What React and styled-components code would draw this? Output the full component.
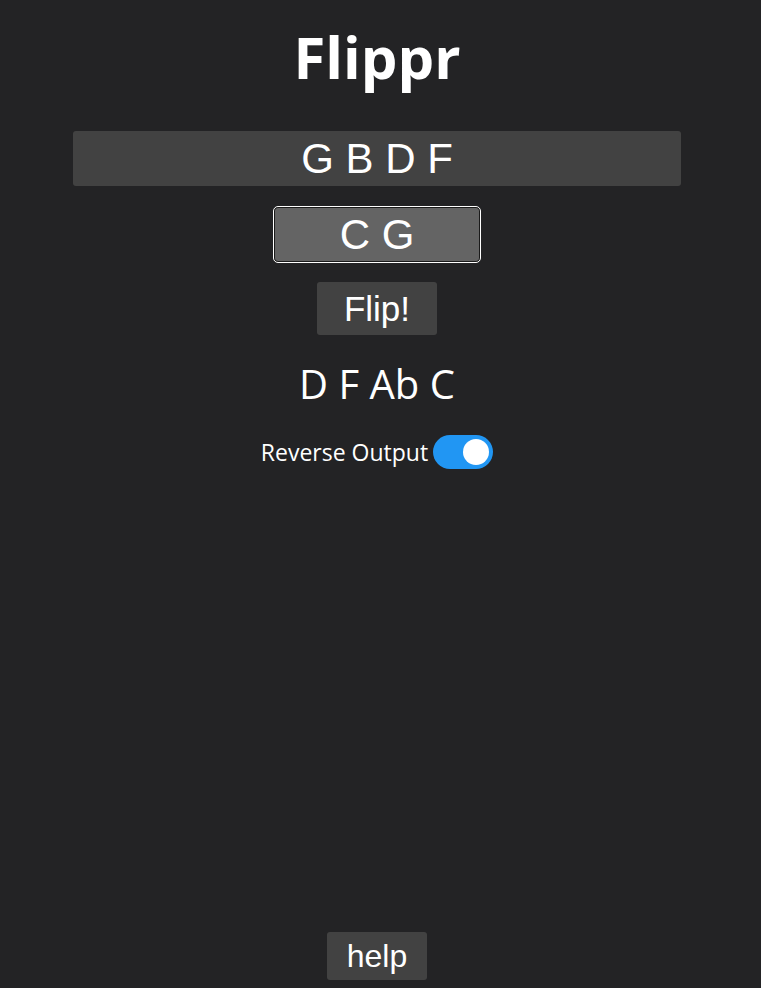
import React, { useState } from "react";
import styled, { createGlobalStyle } from "styled-components";

const Global = createGlobalStyle`
  html, body { margin: 0; padding: 0; background: #232325; }
  body { font-family: "Open Sans", sans-serif; color: #fff; }
  * { box-sizing: border-box; }
`;

const Page = styled.div`
  min-height: 100vh;
  display: flex;
  flex-direction: column;
  align-items: center;
  padding: 0 7px 8px 0;
`;

const Title = styled.h1`
  margin: 8px 0 0;
  font-family: "Open Sans", sans-serif;
  font-weight: 700;
  font-size: 58px;
  line-height: 97px;
  color: #fff;
`;

const Field = styled.input`
  display: block;
  width: ${(p) => p.$width};
  height: ${(p) => p.$height}px;
  margin-top: ${(p) => p.$top}px;
  background: ${(p) => p.$bg};
  color: #fff;
  border: none;
  border-radius: 3px;
  font-family: "Liberation Sans", Arial, sans-serif;
  font-size: 42px;
  text-align: center;
  outline: ${(p) => (p.$focused ? "1px solid #fff" : "none")};
  outline-offset: 1px;
  box-shadow: ${(p) => (p.$focused ? "0 0 0 1px #1a1a1a" : "none")};
`;

const Button = styled.button`
  width: ${(p) => p.$width}px;
  height: ${(p) => p.$height}px;
  margin-top: ${(p) => p.$top}px;
  background: #424242;
  color: #fff;
  border: none;
  border-radius: 3px;
  font-family: "Liberation Sans", Arial, sans-serif;
  font-size: ${(p) => p.$size}px;
  padding: 0;
  cursor: pointer;
`;

const Result = styled.div`
  margin-top: 22px;
  font-size: 40px;
  line-height: 54px;
`;

const ToggleRow = styled.label`
  margin-top: 24px;
  display: flex;
  align-items: center;
  gap: 5px;
  font-size: 23px;
`;

const Track = styled.span`
  position: relative;
  width: 60px;
  height: 34px;
  border-radius: 17px;
  background: ${(p) => (p.$on ? "#2196f3" : "#ccc")};
  display: inline-block;
`;

const Knob = styled.span`
  position: absolute;
  top: 4px;
  left: ${(p) => (p.$on ? "30px" : "4px")};
  width: 26px;
  height: 26px;
  border-radius: 50%;
  background: #fff;
`;

const Spacer = styled.div`
  flex: 1;
`;

export default function App() {
  const [on, setOn] = useState(true);
  return (
    <Page>
      <Global />
      <Title>Flippr</Title>
      <Field $width="608px" $height={55} $top={26} $bg="#424242" defaultValue="G B D F" />
      <Field $width="204px" $height={53} $top={22} $bg="#646464" $focused defaultValue="C G" />
      <Button $width={120} $height={53} $top={21} $size={35}>Flip!</Button>
      <Result>D F Ab C</Result>
      <ToggleRow onClick={() => setOn(!on)}>
        Reverse Output
        <Track $on={on}><Knob $on={on} /></Track>
      </ToggleRow>
      <Spacer />
      <Button $width={100} $height={48} $top={0} $size={32}>help</Button>
    </Page>
  );
}
